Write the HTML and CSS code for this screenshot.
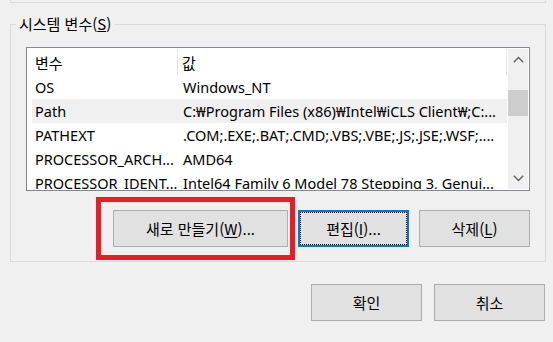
FILE: index.html
```html
<!DOCTYPE html>
<html lang="ko">
<head>
<meta charset="utf-8">
<title>시스템 변수</title>
<link rel="stylesheet" href="styles.css">
</head>
<body>
<div class="window">
  <div class="top-group"></div>
  <fieldset class="group">
    <legend class="group-title">시스템 변수(<u>S</u>)</legend>
    <div class="list">
      <div class="list-main">
        <div class="list-header">
          <div class="hcell h1">변수</div>
          <div class="hcell h2">값</div>
        </div>
        <div class="row"><span class="c1">OS</span><span class="c2">Windows_NT</span></div>
        <div class="row row-sel"><span class="c1">Path</span><span class="c2">C:₩Program Files (x86)₩Intel₩iCLS Client₩;C:...</span></div>
        <div class="row"><span class="c1">PATHEXT</span><span class="c2">.COM;.EXE;.BAT;.CMD;.VBS;.VBE;.JS;.JSE;.WSF;....</span></div>
        <div class="row"><span class="c1">PROCESSOR_ARCH...</span><span class="c2">AMD64</span></div>
        <div class="row"><span class="c1">PROCESSOR_IDENT...</span><span class="c2">Intel64 Family 6 Model 78 Stepping 3, Genui...</span></div>
      </div>
      <div class="scrollbar">
        <div class="sb-btn">
          <svg width="11" height="7" viewBox="0 0 11 7"><path d="M0.8 6.2 L5.5 1.5 L10.2 6.2" fill="none" stroke="#606060" stroke-width="1.4"/></svg>
        </div>
        <div class="sb-track"><div class="sb-thumb"></div></div>
        <div class="sb-btn">
          <svg width="11" height="7" viewBox="0 0 11 7"><path d="M0.8 0.8 L5.5 5.5 L10.2 0.8" fill="none" stroke="#606060" stroke-width="1.4"/></svg>
        </div>
      </div>
    </div>
    <div class="btn-row">
      <span class="mark"></span>
      <button class="btn btn-new">새로 만들기(<u>W</u>)...</button>
      <button class="btn btn-focus">편집(<u>I</u>)...</button>
      <button class="btn">삭제(<u>L</u>)</button>
    </div>
  </fieldset>
  <div class="dialog-buttons">
    <button class="btn">확인</button>
    <button class="btn">취소</button>
  </div>
</div>
</body>
</html>
```
FILE: styles.css
```css
* { box-sizing: border-box; }
html, body {
  margin: 0;
  padding: 0;
  background: #f0f0f0;
}
body {
  width: 553px;
  height: 342px;
  overflow: hidden;
  font-family: "Noto Sans", "Noto Sans CJK KR", sans-serif;
  font-size: 15px;
  color: #000;
}
.window {
  width: 553px;
  height: 342px;
}
.top-group {
  height: 3px;
  margin: 0 7px 0 10px;
  border: 1px solid #dcdcdc;
  border-top: none;
}
.group {
  margin: 11px 7px 0 10px;
  padding: 0 0 14px 5px;
  border: 1px solid #dcdcdc;
  min-width: 0;
}
.group-title {
  padding: 0 3px;
  font-family: "Noto Sans CJK KR", sans-serif;
  font-size: 15px;
  line-height: 20px;
}
.list {
  margin: 13px 0 0 10px;
  width: 504px;
  height: 144px;
  border: 1px solid #828790;
  background: #fff;
  padding: 1px;
  display: flex;
}
.list-main {
  flex: 1;
  overflow: hidden;
}
.list-header {
  display: flex;
  height: 26px;
  align-items: stretch;
}
.hcell {
  display: flex;
  align-items: center;
  font-family: "Noto Sans CJK KR", sans-serif;
  font-size: 15px;
  border-right: 1px solid #e5e5e5;
}
.h1 { width: 150px; padding-left: 7px; }
.h2 { width: 329px; padding-left: 4px; }
.row {
  display: flex;
  align-items: center;
  height: 24px;
  margin-left: 4px;
  width: 475px;
  white-space: nowrap;
  overflow: hidden;
  font-size: 14.5px;
}
.row-sel { background: #f0f0f0; }
.c1 { width: 146px; padding-left: 3px; flex: none; overflow: hidden; }
.c2 { padding-left: 5px; flex: none; }
.scrollbar {
  width: 20px;
  flex: none;
  background: #f0f0f0;
  display: flex;
  flex-direction: column;
}
.sb-btn {
  height: 21px;
  display: flex;
  align-items: center;
  justify-content: center;
  flex: none;
}
.sb-track { flex: 1; }
.sb-thumb {
  margin-top: 20px;
  height: 26px;
  background: #cdcdcd;
}
.btn-row {
  position: relative;
  width: 504px;
  margin: 19px 0 0 10px;
  display: flex;
  justify-content: flex-end;
  gap: 10px;
}
.btn {
  height: 37px;
  width: 111px;
  padding: 0;
  margin: 0;
  background: #e1e1e1;
  border: 1px solid #adadad;
  font-family: "Noto Sans CJK KR", "Noto Sans", sans-serif;
  font-size: 15px;
  color: #000;
  line-height: 20px;
}
.btn u { text-underline-offset: 2px; }
.btn-new { width: 175px; }
.btn-focus {
  border: 2px solid #0078d7;
  outline: 1px dotted #000;
  outline-offset: -3px;
}
.mark {
  position: absolute;
  left: 70px;
  top: -13px;
  width: 199px;
  height: 63px;
  border: 5px solid #ed1c24;
}
.dialog-buttons {
  margin: 22px 8px 0 0;
  display: flex;
  justify-content: flex-end;
  gap: 12px;
}
```
